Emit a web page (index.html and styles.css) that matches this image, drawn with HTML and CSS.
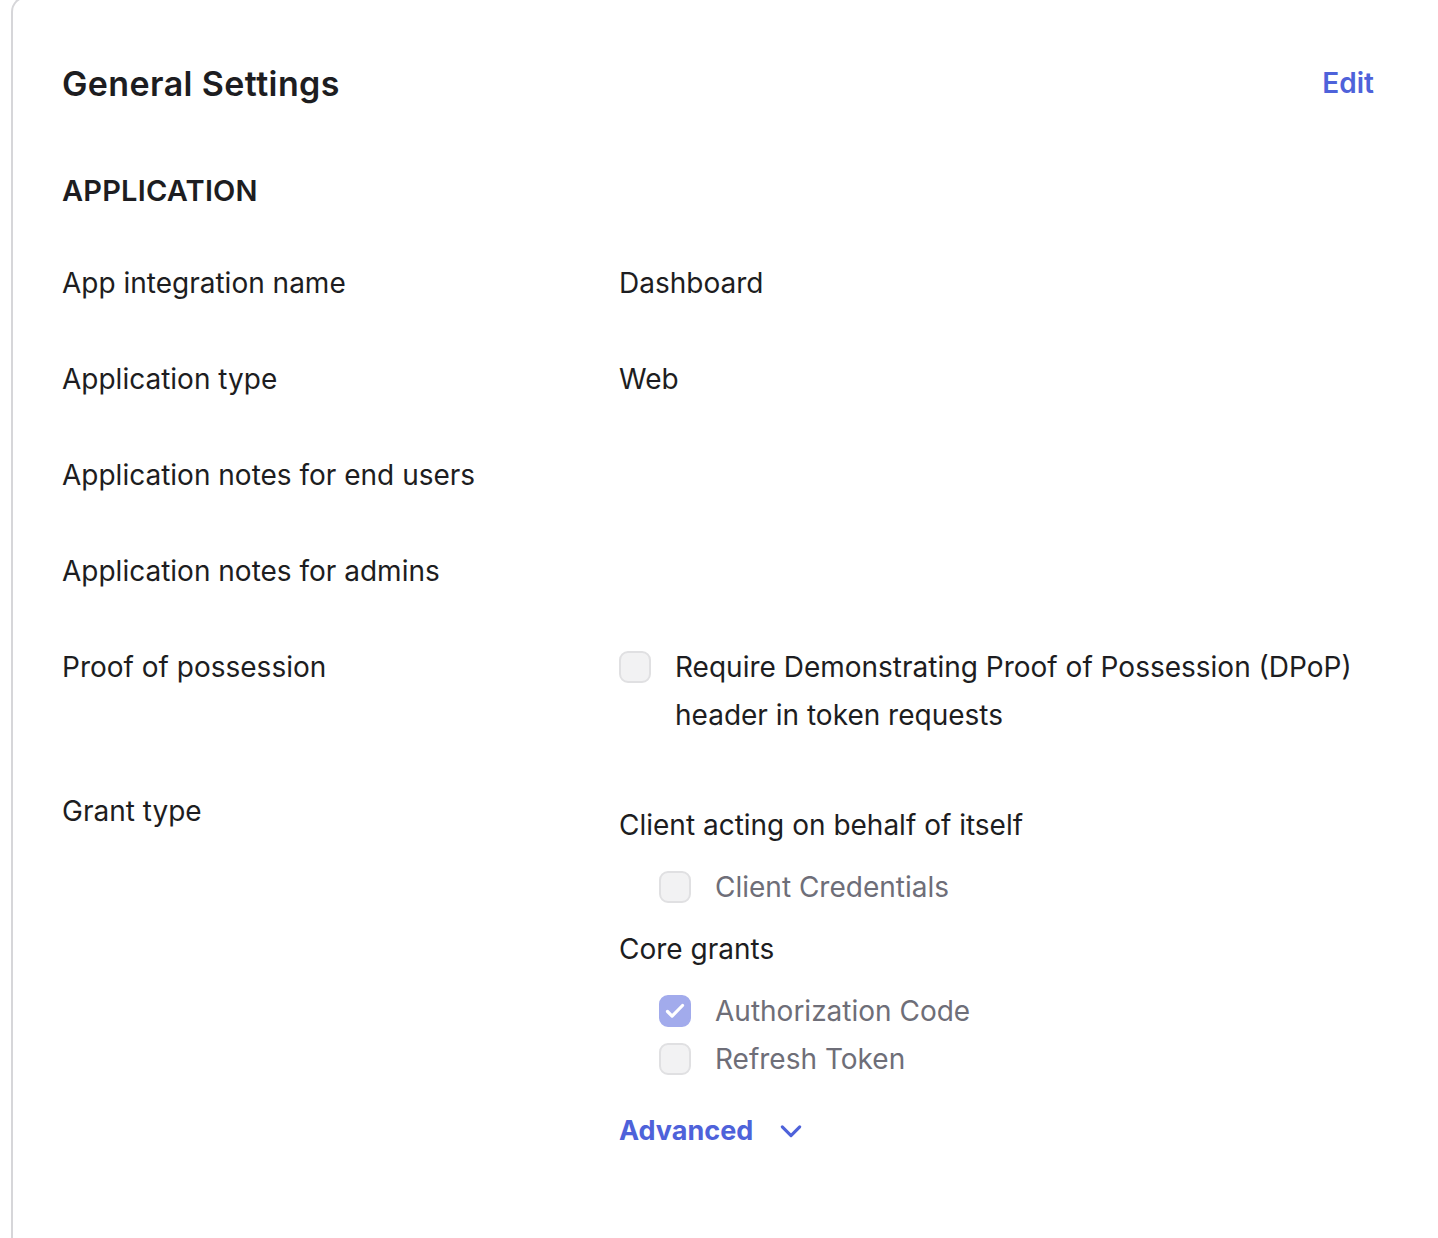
FILE: index.html
```html
<!DOCTYPE html>
<html lang="en">
<head>
<meta charset="utf-8">
<title>General Settings</title>
<link rel="stylesheet" href="styles.css">
</head>
<body>
<section class="card">
  <header class="card-head">
    <h2 class="title">General Settings</h2>
    <a class="edit" href="#">Edit</a>
  </header>
  <h3 class="section">APPLICATION</h3>
  <dl class="rows">
    <div class="row"><dt>App integration name</dt><dd>Dashboard</dd></div>
    <div class="row"><dt>Application type</dt><dd>Web</dd></div>
    <div class="row"><dt>Application notes for end users</dt><dd></dd></div>
    <div class="row"><dt>Application notes for admins</dt><dd></dd></div>
    <div class="row"><dt>Proof of possession</dt>
      <dd><label class="check top"><span class="box"></span><span class="txt dark">Require Demonstrating Proof of Possession (DPoP) header in token requests</span></label></dd>
    </div>
    <div class="row grant"><dt>Grant type</dt>
      <dd>
        <div class="legend">Client acting on behalf of itself</div>
        <div class="group">
          <label class="check"><span class="box"></span><span class="txt">Client Credentials</span></label>
        </div>
        <div class="legend second">Core grants</div>
        <div class="group">
          <label class="check"><span class="box on"><svg viewBox="0 0 24 24" width="24" height="24"><path d="M4.5 12.5l4.6 4.6 10.4-10.6" fill="none" stroke="#fff" stroke-width="3.2" stroke-linecap="round" stroke-linejoin="round"/></svg></span><span class="txt">Authorization Code</span></label>
          <label class="check"><span class="box"></span><span class="txt">Refresh Token</span></label>
        </div>
        <a class="advanced" href="#">Advanced <svg viewBox="0 0 24 24" width="24" height="24"><path d="M2.5 7.5l9.5 9.5 9.5-9.5" fill="none" stroke="#4e62da" stroke-width="3.4" stroke-linecap="round" stroke-linejoin="round"/></svg></a>
      </dd>
    </div>
  </dl>
</section>
</body>
</html>
```

FILE: styles.css
```css
html, body {
  margin: 0;
  padding: 0;
  background: #ffffff;
}
body {
  font-family: Inter, "Noto Sans", sans-serif;
  color: #1d1d21;
  overflow: hidden;
  height: 1238px;
}
.card {
  margin: -4px 0 0 11px;
  border: 2px solid #d6d6d9;
  border-right: none;
  border-bottom: none;
  border-radius: 16px 0 0 0;
  padding: 0 64px 0 49px;
  min-height: 1300px;
  box-sizing: border-box;
}
.card-head {
  display: flex;
  justify-content: space-between;
  align-items: center;
  height: 48px;
  margin-top: 61px;
}
.title {
  margin: 0;
  font-size: 34px;
  font-weight: 600;
  letter-spacing: 0.4px;
}
.edit {
  font-size: 28px;
  font-weight: 600;
  color: #4e62da;
  text-decoration: none;
}
.section {
  margin: 60px 0 0;
  font-size: 29px;
  font-weight: 600;
  line-height: 48px;
  letter-spacing: 0.2px;
}
.rows {
  margin: 44px 0 0;
  font-size: 28px;
  line-height: 48px;
}
.row {
  display: grid;
  grid-template-columns: 557px 1fr;
  margin-bottom: 48px;
}
.row dt, .row dd {
  margin: 0;
}
.row dd { min-height: 48px; }
.check {
  display: flex;
  align-items: center;
  gap: 24px;
}
.check.top { align-items: flex-start; }
.check.top .box { margin-top: 8px; }
.box {
  flex: 0 0 auto;
  width: 32px;
  height: 32px;
  box-sizing: border-box;
  border: 2px solid #e0e0e2;
  background: #f2f2f3;
  border-radius: 9px;
  display: flex;
  align-items: center;
  justify-content: center;
}
.box.on {
  background: #a2abec;
  border-color: #a2abec;
}
.txt { color: #6e6e78; }
.txt.dark { color: #1d1d21; }
.legend {
  margin-top: 14px;
}
.legend.second { margin-top: 14px; }
.group {
  margin: 14px 0 0 40px;
}
.advanced {
  display: inline-flex;
  align-items: center;
  gap: 27px;
  margin-top: 24px;
  font-size: 27px;
  font-weight: 700;
  color: #4e62da;
  text-decoration: none;
}
.advanced svg { width: 22px; height: 22px; }
```
